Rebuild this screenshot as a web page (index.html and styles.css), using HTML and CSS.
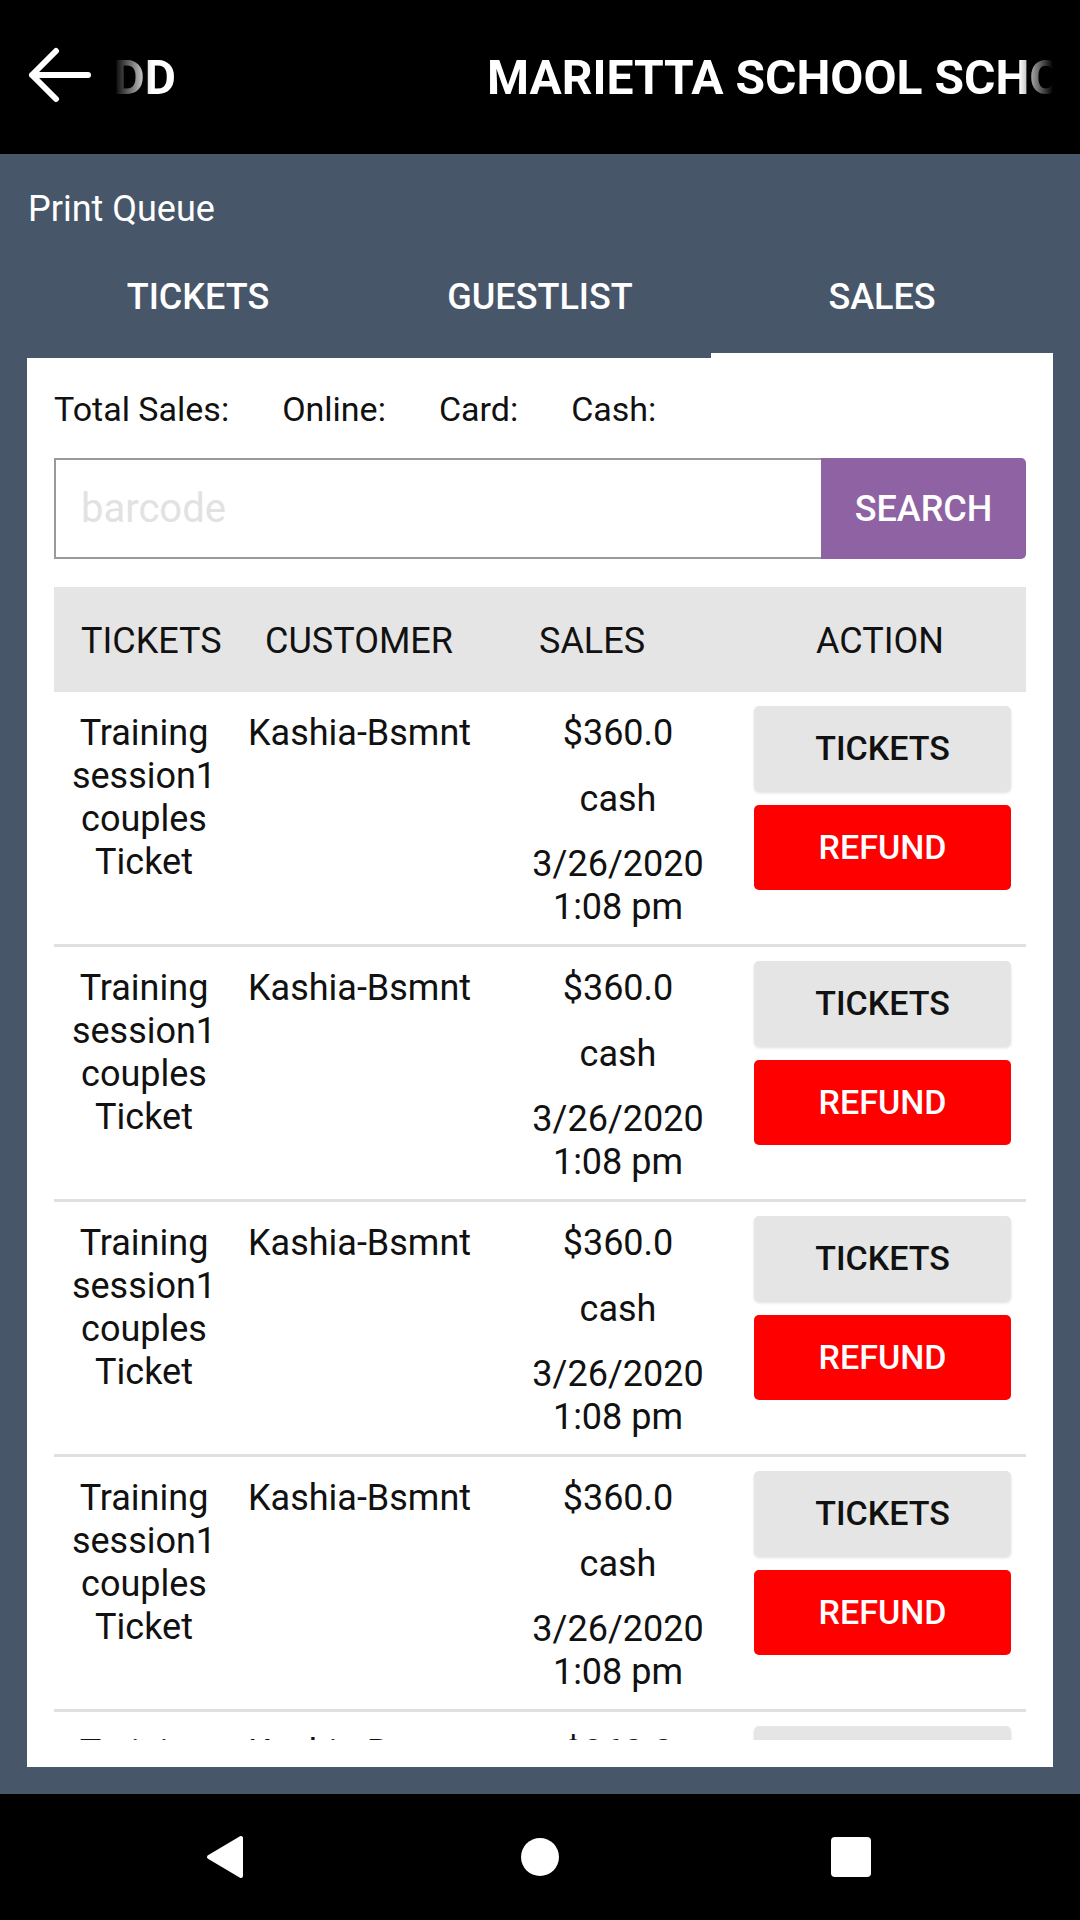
FILE: index.html
```html
<!DOCTYPE html>
<html>
<head>
<meta charset="utf-8">
<link rel="stylesheet" href="styles.css">
</head>
<body>
<div class="screen">
  <header class="topbar">
    <svg class="back" width="64" height="60" viewBox="0 0 64 60">
      <path d="M4 28 H60 M4 28 L28 4 M4 28 L28 52" fill="none" stroke="#fff" stroke-width="6" stroke-linecap="round" stroke-linejoin="round"/>
    </svg>
    <div class="title-left"><span>DD</span></div>
    <div class="spacer"></div>
    <div class="title-right"><span>MARIETTA SCHOOL SCHOOL</span></div>
  </header>

  <main class="content">
    <div class="queue">Print Queue</div>
    <nav class="tabs">
      <div class="tab">TICKETS</div>
      <div class="tab">GUESTLIST</div>
      <div class="tab active">SALES</div>
    </nav>

    <section class="card">
      <div class="totals">
        <span>Total Sales:</span>
        <span>Online:</span>
        <span>Card:</span>
        <span>Cash:</span>
      </div>
      <div class="search">
        <div class="input"><span class="placeholder">barcode</span></div>
        <div class="search-btn">SEARCH</div>
      </div>
      <div class="thead">
        <div class="h1">TICKETS</div>
        <div class="h2">CUSTOMER</div>
        <div class="h3">SALES</div>
        <div class="h4">ACTION</div>
      </div>
      <div class="list">
        <div class="row">
          <div class="c-ticket">Training session1 couples Ticket</div>
          <div class="c-cust">Kashia-Bsmnt</div>
          <div class="c-sales"><div>$360.0</div><div class="pay">cash</div><div class="date">3/26/2020 1:08 pm</div></div>
          <div class="c-act"><div class="btn btn-tickets">TICKETS</div><div class="btn btn-refund">REFUND</div></div>
        </div>
        <div class="row">
          <div class="c-ticket">Training session1 couples Ticket</div>
          <div class="c-cust">Kashia-Bsmnt</div>
          <div class="c-sales"><div>$360.0</div><div class="pay">cash</div><div class="date">3/26/2020 1:08 pm</div></div>
          <div class="c-act"><div class="btn btn-tickets">TICKETS</div><div class="btn btn-refund">REFUND</div></div>
        </div>
        <div class="row">
          <div class="c-ticket">Training session1 couples Ticket</div>
          <div class="c-cust">Kashia-Bsmnt</div>
          <div class="c-sales"><div>$360.0</div><div class="pay">cash</div><div class="date">3/26/2020 1:08 pm</div></div>
          <div class="c-act"><div class="btn btn-tickets">TICKETS</div><div class="btn btn-refund">REFUND</div></div>
        </div>
        <div class="row">
          <div class="c-ticket">Training session1 couples Ticket</div>
          <div class="c-cust">Kashia-Bsmnt</div>
          <div class="c-sales"><div>$360.0</div><div class="pay">cash</div><div class="date">3/26/2020 1:08 pm</div></div>
          <div class="c-act"><div class="btn btn-tickets">TICKETS</div><div class="btn btn-refund">REFUND</div></div>
        </div>
        <div class="row">
          <div class="c-ticket">Training session1 couples Ticket</div>
          <div class="c-cust">Kashia-Bsmnt</div>
          <div class="c-sales"><div>$360.0</div><div class="pay">cash</div><div class="date">3/26/2020 1:08 pm</div></div>
          <div class="c-act"><div class="btn btn-tickets">TICKETS</div><div class="btn btn-refund">REFUND</div></div>
        </div>
      </div>
    </section>
  </main>

  <footer class="navbar">
    <svg class="nav-back" width="40" height="46" viewBox="0 0 40 46">
      <path d="M4 23 L36 4 L36 42 Z" fill="#fff" stroke="#fff" stroke-width="4" stroke-linejoin="round"/>
    </svg>
    <div class="nav-home"></div>
    <div class="nav-recent"></div>
  </footer>
</div>
</body>
</html>
```

FILE: styles.css
```css
* { box-sizing: border-box; }
html, body { margin: 0; padding: 0; }
body {
  width: 1080px;
  height: 1920px;
  font-family: Roboto, "Noto Sans", "Liberation Sans", sans-serif;
  background: #000;
  overflow: hidden;
}
.screen {
  width: 1080px;
  height: 1920px;
  display: flex;
  flex-direction: column;
}

/* Top bar */
.topbar {
  height: 154px;
  flex: 0 0 154px;
  background: #000;
  display: flex;
  align-items: center;
  color: #fff;
  font-weight: 700;
  font-size: 48px;
}
.back { margin-left: 28px; flex: 0 0 auto; }
.title-left {
  margin-left: 22px;
  width: 62px;
  overflow: hidden;
  white-space: nowrap;
  display: flex;
  justify-content: flex-end;
  -webkit-mask-image: linear-gradient(to right, transparent 0, #000 38px);
  mask-image: linear-gradient(to right, transparent 0, #000 38px);
}
.spacer { flex: 1; }
.title-right {
  width: 566px;
  margin-right: 27px;
  overflow: hidden;
  white-space: nowrap;
  -webkit-mask-image: linear-gradient(to right, #000 calc(100% - 34px), transparent 100%);
  mask-image: linear-gradient(to right, #000 calc(100% - 34px), transparent 100%);
}

/* Content */
.content {
  flex: 0 0 1640px;
  background: #485669;
  padding: 34px 27px 27px;
  display: flex;
  flex-direction: column;
}
.queue {
  color: #fff;
  font-size: 36px;
  line-height: 42px;
  height: 42px;
  padding-left: 1px;
}
.tabs {
  display: flex;
  height: 128px;
}
.tab {
  flex: 1;
  display: flex;
  align-items: center;
  justify-content: center;
  color: #fff;
  font-size: 36px;
  font-weight: 500;
  border-bottom: 5px solid transparent;
  padding-top: 10px;
}
.tab.active { border-bottom-color: #fff; }

.card {
  background: #fff;
  height: 1409px;
  padding: 32px 27px 27px;
  display: flex;
  flex-direction: column;
  color: #111;
}
.totals {
  display: flex;
  gap: 53px;
  font-size: 34px;
  line-height: 39px;
  height: 39px;
}
.search {
  margin-top: 29px;
  height: 101px;
  display: flex;
}
.input {
  flex: 1;
  border: 2px solid #9a9a9a;
  border-right: none;
  display: flex;
  align-items: center;
  padding-left: 25px;
}
.placeholder {
  font-size: 40px;
  color: #e2e2e2;
}
.search-btn {
  width: 205px;
  background: #8e62a3;
  color: #fff;
  font-size: 36px;
  font-weight: 500;
  display: flex;
  align-items: center;
  justify-content: center;
  border-radius: 0 5px 5px 0;
}
.thead {
  margin-top: 28px;
  height: 105px;
  background: #e5e5e5;
  display: grid;
  grid-template-columns: 180px 264px 240px 1fr;
  align-items: center;
  font-size: 36px;
  padding-top: 2px;
}
.h1 { padding-left: 27px; }
.h2 { padding-left: 31px; }
.h3 { padding-left: 41px; }
.h4 { padding-left: 78px; }

.list {
  flex: 1;
  min-height: 0;
  overflow: hidden;
}
.row {
  display: grid;
  grid-template-columns: 180px 264px 240px 1fr;
  padding: 14px 0 17px;
  border-bottom: 3px solid #e0e0e0;
  font-size: 36px;
  line-height: 43px;
  height: 255px;
}
.c-ticket {
  padding-top: 6px;
  text-align: center;
}
.c-cust {
  padding-top: 6px;
  padding-left: 14px;
}
.c-sales {
  padding-top: 6px;
  text-align: center;
}
.pay { margin-top: 23px; }
.date { margin-top: 22px; }
.c-act {
  display: flex;
  flex-direction: column;
  gap: 14px;
  padding-left: 16px;
  padding-right: 15px;
}
.btn {
  height: 85px;
  border-radius: 5px;
  display: flex;
  align-items: center;
  justify-content: center;
  font-size: 34px;
  font-weight: 500;
}
.btn-tickets {
  background: #e5e5e5;
  color: #111;
  box-shadow: 0 2px 3px rgba(0,0,0,0.12);
}
.btn-refund {
  background: #ff0000;
  color: #fff;
}

/* Nav bar */
.navbar {
  flex: 0 0 126px;
  background: #000;
  display: flex;
  align-items: center;
}
.nav-back { margin-left: 205px; }
.nav-home {
  width: 38px;
  height: 38px;
  border-radius: 50%;
  background: #fff;
  margin-left: 276px;
}
.nav-recent {
  width: 40px;
  height: 40px;
  border-radius: 4px;
  background: #fff;
  margin-left: 272px;
}
```
